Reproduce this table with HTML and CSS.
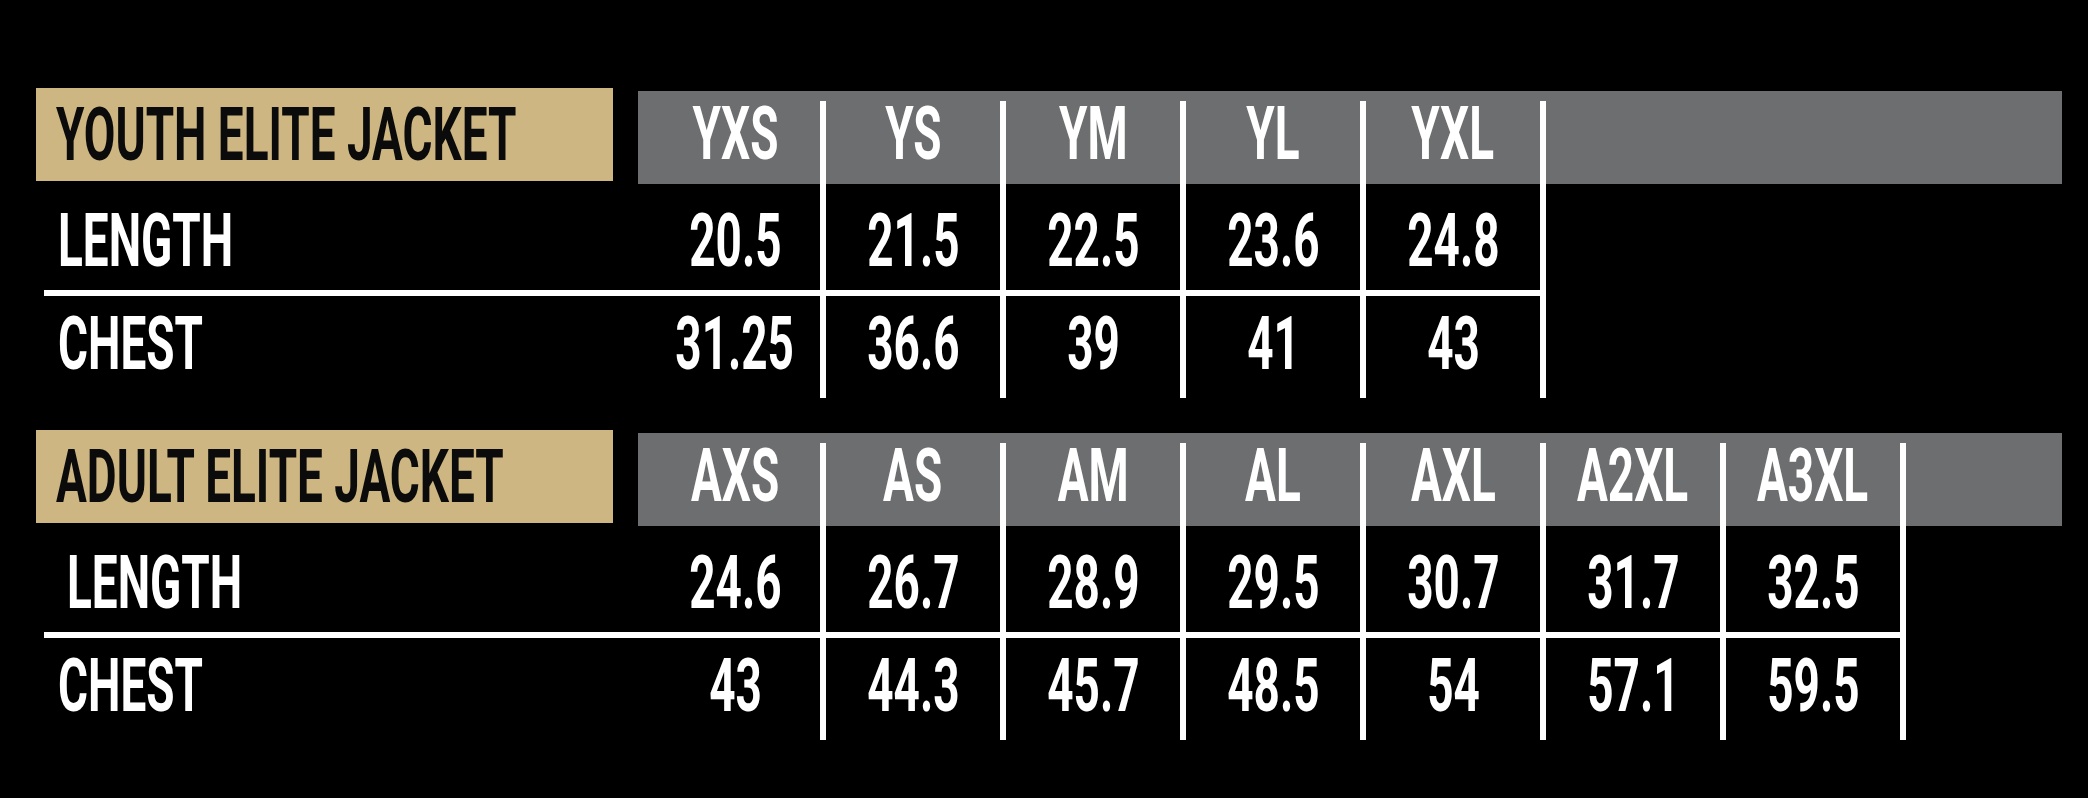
FILE: index.html
```html
<!DOCTYPE html>
<html lang="en">
<head>
    <meta charset="UTF-8">
    <meta name="viewport" content="width=device-width, initial-scale=1.0">
    <title>Elite Jacket Size Chart</title>
    <link rel="stylesheet" href="styles.css">
</head>
<body>
    <div class="chart">
        <!-- Youth -->
        <section class="size-table">
            <div class="head-row">
                <div class="title"><span class="txt">YOUTH ELITE JACKET</span></div>
                <div class="sizes">
                    <div class="cell first"><span class="txt">YXS</span></div>
                    <div class="cell"><span class="txt">YS</span></div>
                    <div class="cell"><span class="txt">YM</span></div>
                    <div class="cell"><span class="txt">YL</span></div>
                    <div class="cell"><span class="txt">YXL</span></div>
                </div>
            </div>
            <div class="row length">
                <div class="label"><span class="txt">LENGTH</span></div>
                <div class="cell first"><span class="txt">20.5</span></div>
                <div class="cell"><span class="txt">21.5</span></div>
                <div class="cell"><span class="txt">22.5</span></div>
                <div class="cell"><span class="txt">23.6</span></div>
                <div class="cell"><span class="txt">24.8</span></div>
            </div>
            <div class="row chest">
                <div class="label"><span class="txt">CHEST</span></div>
                <div class="cell first"><span class="txt">31.25</span></div>
                <div class="cell"><span class="txt">36.6</span></div>
                <div class="cell"><span class="txt">39</span></div>
                <div class="cell"><span class="txt">41</span></div>
                <div class="cell"><span class="txt">43</span></div>
            </div>
        </section>

        <!-- Adult -->
        <section class="size-table">
            <div class="head-row">
                <div class="title"><span class="txt">ADULT ELITE JACKET</span></div>
                <div class="sizes">
                    <div class="cell first"><span class="txt">AXS</span></div>
                    <div class="cell"><span class="txt">AS</span></div>
                    <div class="cell"><span class="txt">AM</span></div>
                    <div class="cell"><span class="txt">AL</span></div>
                    <div class="cell"><span class="txt">AXL</span></div>
                    <div class="cell"><span class="txt">A2XL</span></div>
                    <div class="cell"><span class="txt">A3XL</span></div>
                </div>
            </div>
            <div class="row length">
                <div class="label indent"><span class="txt">LENGTH</span></div>
                <div class="cell first"><span class="txt">24.6</span></div>
                <div class="cell"><span class="txt">26.7</span></div>
                <div class="cell"><span class="txt">28.9</span></div>
                <div class="cell"><span class="txt">29.5</span></div>
                <div class="cell"><span class="txt">30.7</span></div>
                <div class="cell"><span class="txt">31.7</span></div>
                <div class="cell"><span class="txt">32.5</span></div>
            </div>
            <div class="row chest">
                <div class="label"><span class="txt">CHEST</span></div>
                <div class="cell first"><span class="txt">43</span></div>
                <div class="cell"><span class="txt">44.3</span></div>
                <div class="cell"><span class="txt">45.7</span></div>
                <div class="cell"><span class="txt">48.5</span></div>
                <div class="cell"><span class="txt">54</span></div>
                <div class="cell"><span class="txt">57.1</span></div>
                <div class="cell"><span class="txt">59.5</span></div>
            </div>
        </section>
    </div>
</body>
</html>
```

FILE: styles.css
```css
* {
    margin: 0;
    padding: 0;
    box-sizing: border-box;
    font-family: Roboto, "Liberation Sans", sans-serif;
}

body {
    background-color: #000;
    width: 2088px;
    height: 798px;
    overflow: hidden;
}

.chart {
    padding: 88px 0 0 36px;
}

.size-table + .size-table {
    margin-top: 32px;
}

.head-row {
    display: flex;
    align-items: flex-start;
}

.title {
    width: 577px;
    height: 93px;
    margin-right: 25px;
    padding-left: 20px;
    background: #cdb682;
    color: #0b0b0b;
    display: flex;
    align-items: center;
}

.sizes {
    width: 1424px;
    height: 93px;
    margin-top: 3px;
    padding-top: 10px;
    background: #6d6e70;
    display: flex;
}

.cell {
    width: 180px;
    display: flex;
    justify-content: center;
    align-items: center;
    border-right: 6px solid #fff;
    color: #fff;
}

.cell.first {
    width: 188px;
    padding-left: 12px;
}

.sizes .cell .txt {
    margin-bottom: 18px;
}

.row {
    display: flex;
    width: fit-content;
    margin-left: 8px;
}

.label {
    width: 594px;
    padding-left: 14px;
    display: flex;
    align-items: center;
    color: #fff;
}

.label.indent {
    padding-left: 23px;
}

.row.length {
    height: 112px;
    border-bottom: 6px solid #fff;
}

.row.length .cell,
.row.length .label {
    padding-top: 8px;
}

.row.chest {
    height: 102px;
}

.row.chest .cell,
.row.chest .label {
    padding-bottom: 6px;
}

.txt {
    display: inline-block;
    font-size: 74px;
    font-weight: 700;
    line-height: 1;
    white-space: nowrap;
    transform: scaleX(0.62);
}

.title .txt,
.label .txt {
    transform-origin: left center;
}
```
